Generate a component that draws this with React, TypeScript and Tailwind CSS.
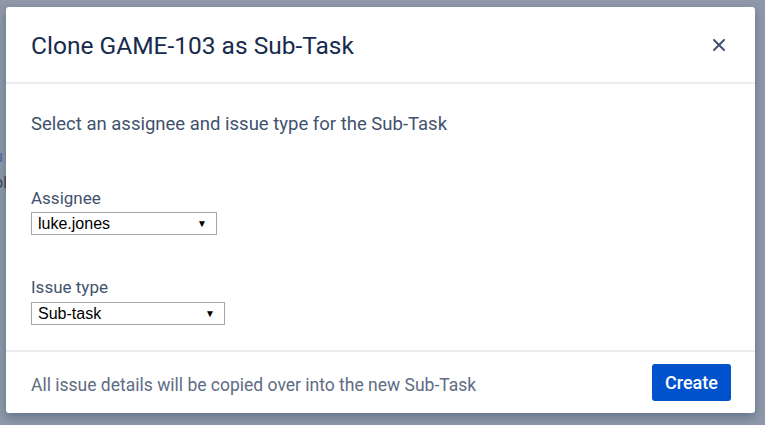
import React from 'react';

const font = { fontFamily: 'Roboto, "Noto Sans", Arial, sans-serif' };

const FakeSelect: React.FC<{ value: string; width: string }> = ({ value, width }) => (
  <div
    className={`${width} h-[23px] flex items-center justify-between border border-[#a6a6a6] bg-white pl-[6px] pr-[9px] text-[16px] leading-none text-black`}
    style={{ fontFamily: '"Liberation Sans", Arial, sans-serif' }}
  >
    <span>{value}</span>
    <span className="text-[10px]">▼</span>
  </div>
);

export default function App() {
  return (
    <div className="relative w-[765px] h-[425px] overflow-hidden bg-[#8e98a9] pt-[7px] pl-[6px]" style={font}>
      {/* page underneath the blanket, only a sliver shows */}
      <div className="absolute left-[-6px] top-[144px] text-[16px] leading-[26px] text-[#4a6aa5]">
        <div>u</div>
        <div className="text-[#3c4556]">ol</div>
      </div>

      <div className="relative w-[749px] h-[406px] bg-white rounded-[3px] shadow-[0_4px_10px_rgba(9,30,66,0.3)] flex flex-col">
        {/* header */}
        <div className="h-[77px] flex items-center justify-between pl-[25px] pr-[29px] border-b-2 border-[#ebecf0]">
          <h1 className="text-[24.5px] text-[#172b4d] leading-none pt-[3px]">Clone GAME-103 as Sub-Task</h1>
          <button className="w-[14px] h-[14px] text-[#42526e]">
            <svg viewBox="0 0 14 14" width="14" height="14" fill="none" stroke="currentColor" strokeWidth="2" strokeLinecap="round">
              <path d="M2 2l10 10M12 2L2 12" />
            </svg>
          </button>
        </div>

        {/* body */}
        <div className="flex-1 pl-[25px] pt-[30px] text-[#42526e]">
          <p className="text-[18.5px] leading-[20px]">Select an assignee and issue type for the Sub-Task</p>

          <div className="mt-[54px]">
            <label className="block text-[17px] leading-[20px] mb-[4px]">Assignee</label>
            <FakeSelect value="luke.jones" width="w-[186px]" />
          </div>

          <div className="mt-[42px]">
            <label className="block text-[17px] leading-[20px] mb-[5px]">Issue type</label>
            <FakeSelect value="Sub-task" width="w-[194px]" />
          </div>
        </div>

        {/* footer */}
        <div className="h-[63px] flex items-center justify-between pl-[25px] pr-[24px] border-t-2 border-[#ebecf0]">
          <p className="text-[17.5px] text-[#5e6c84] pt-[6px]">All issue details will be copied over into the new Sub-Task</p>
          <button className="w-[79px] h-[37px] rounded-[3px] bg-[#0052cc] text-white text-[18px] font-medium">Create</button>
        </div>
      </div>
    </div>
  );
}
